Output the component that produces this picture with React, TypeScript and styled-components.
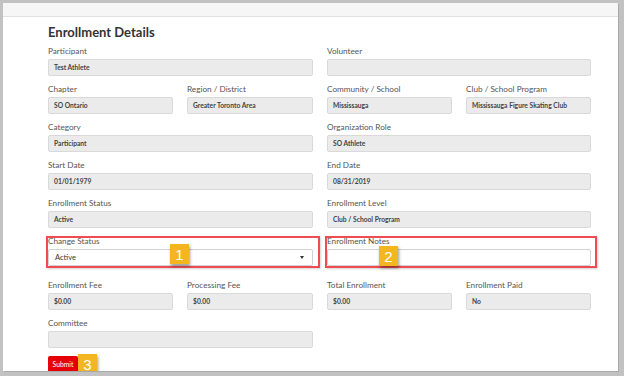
import React from 'react'
import styled, { createGlobalStyle } from 'styled-components'

const GlobalStyle = createGlobalStyle`
  html, body {
    margin: 0;
    padding: 0;
    background: #c2c2c2;
  }
  body {
    font-family: Lato, "Open Sans", sans-serif;
  }
`

const Frame = styled.div`
  width: 624px;
  height: 376px;
  box-sizing: border-box;
  padding: 3px 6px 5px 3px;
  background: #c2c2c2;
`

const Page = styled.div`
  height: 100%;
  display: flex;
  flex-direction: column;
  background: #fff;
  box-shadow: 1px 1px 0 #a9a9a9;
  overflow: hidden;
`

const TopBar = styled.div`
  height: 13px;
  flex-shrink: 0;
  background: #f6f6f6;
  border-bottom: 1px solid #e1e1e1;
`

const Content = styled.div`
  padding: 7px 0 0 45px;
`

const Title = styled.h2`
  margin: 0 0 5px;
  font: 700 13px/16px Lato, "Open Sans", sans-serif;
  color: #333;
`

const Grid = styled.div`
  display: grid;
  grid-template-columns: 125px 126px 125px 125px;
  column-gap: 14px;
  row-gap: 7px;
`

const Field = styled.div<{ $span: number; $marked?: boolean }>`
  position: relative;
  grid-column: span ${(p) => p.$span};
  ${(p) => (p.$marked ? 'margin-bottom: 6px;' : '')}
`

const Label = styled.div`
  height: 12px;
  margin-bottom: 2px;
  font-size: 8.2px;
  line-height: 12px;
  color: #555;
  white-space: nowrap;
`

const Box = styled.div<{ $editable?: boolean }>`
  position: relative;
  height: 17px;
  box-sizing: border-box;
  padding: 0 5px;
  border: 1px solid ${(p) => (p.$editable ? '#d2d2d2' : '#d9d9d9')};
  border-radius: 2px;
  background: ${(p) => (p.$editable ? '#fff' : '#ebebeb')};
  font-size: 6.7px;
  font-weight: 700;
  line-height: 15px;
  color: #444;
  white-space: nowrap;
  overflow: hidden;
`

const SelectText = styled.span`
  padding-left: 1px;
  font-weight: 400;
  font-size: 7.5px;
  color: #333;
`

const Caret = styled.span`
  position: absolute;
  right: 8px;
  top: 6px;
  width: 0;
  height: 0;
  border-left: 2px solid transparent;
  border-right: 2px solid transparent;
  border-top: 3px solid #333;
`

const Highlight = styled.div<{ $right: number }>`
  position: absolute;
  top: 1px;
  left: -2px;
  right: -${(p) => p.$right}px;
  bottom: -2px;
  border: 2px solid #ef4c52;
  box-shadow: 1px 1px 2px rgba(0, 0, 0, 0.18);
  pointer-events: none;
`

const Badge = styled.div<{ $x?: number; $y?: number }>`
  ${(p) =>
    p.$x !== undefined
      ? `position: absolute; left: ${p.$x}px; top: ${p.$y}px;`
      : 'position: relative;'}
  width: 19px;
  height: 20px;
  display: flex;
  align-items: center;
  justify-content: center;
  background: #f4b620;
  color: #fff;
  font: 400 15px/1 "Liberation Sans", Arial, sans-serif;
  box-shadow: 1px 2px 3px rgba(0, 0, 0, 0.4);
`

const Actions = styled.div`
  display: flex;
  align-items: center;
  margin-top: 6px;
`

const SubmitButton = styled.button`
  width: 30px;
  height: 16px;
  padding: 0;
  border: none;
  border-radius: 2px;
  background: #e60008;
  color: #fff;
  font: 400 6.8px/16px Lato, "Open Sans", sans-serif;
`

type Item = {
  label: string
  value?: string
  span: number
  kind?: 'select' | 'text'
  badge?: { n: number; x: number; y: number; right: number }
}

const items: Item[] = [
  { label: 'Participant', value: 'Test Athlete', span: 2 },
  { label: 'Volunteer', value: '', span: 2 },
  { label: 'Chapter', value: 'SO Ontario', span: 1 },
  { label: 'Region / District', value: 'Greater Toronto Area', span: 1 },
  { label: 'Community / School', value: 'Mississauga', span: 1 },
  { label: 'Club / School Program', value: 'Mississauga Figure Skating Club', span: 1 },
  { label: 'Category', value: 'Participant', span: 2 },
  { label: 'Organization Role', value: 'SO Athlete', span: 2 },
  { label: 'Start Date', value: '01/01/1979', span: 2 },
  { label: 'End Date', value: '08/31/2019', span: 2 },
  { label: 'Enrollment Status', value: 'Active', span: 2 },
  { label: 'Enrollment Level', value: 'Club / School Program', span: 2 },
  { label: 'Change Status', value: 'Active', span: 2, kind: 'select', badge: { n: 1, x: 122, y: 9, right: 7 } },
  { label: 'Enrollment Notes', value: '', span: 2, kind: 'text', badge: { n: 2, x: 52, y: 11, right: 6 } },
  { label: 'Enrollment Fee', value: '$0.00', span: 1 },
  { label: 'Processing Fee', value: '$0.00', span: 1 },
  { label: 'Total Enrollment', value: '$0.00', span: 1 },
  { label: 'Enrollment Paid', value: 'No', span: 1 },
  { label: 'Committee', value: '', span: 2 },
]

const App: React.FC = () => {
  return (
    <>
      <GlobalStyle />
      <Frame>
        <Page>
          <TopBar />
          <Content>
            <Title>Enrollment Details</Title>
            <Grid>
              {items.map((item) => (
                <Field key={item.label} $span={item.span} $marked={!!item.badge}>
                  <Label>{item.label}</Label>
                  {item.kind === 'select' ? (
                    <Box $editable>
                      <SelectText>{item.value}</SelectText>
                      <Caret />
                    </Box>
                  ) : (
                    <Box $editable={item.kind === 'text'}>{item.value}</Box>
                  )}
                  {item.badge && (
                    <>
                      <Highlight $right={item.badge.right} />
                      <Badge $x={item.badge.x} $y={item.badge.y}>
                        {item.badge.n}
                      </Badge>
                    </>
                  )}
                </Field>
              ))}
            </Grid>
            <Actions>
              <SubmitButton>Submit</SubmitButton>
              <Badge>3</Badge>
            </Actions>
          </Content>
        </Page>
      </Frame>
    </>
  )
}

export default App
